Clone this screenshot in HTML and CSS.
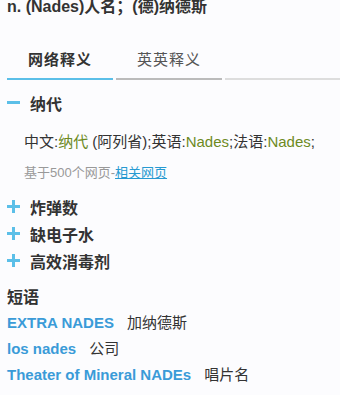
FILE: index.html
```html
<!DOCTYPE html>
<html>
<head>
    <title>Nades</title>
    <link rel="stylesheet" href="styles.css">
</head>
<body>
    <div class="trans">n. (Nades)人名；(德)纳德斯</div>

    <div class="tabs">
        <div class="tab active">网络释义</div>
        <div class="tab">英英释义</div>
        <div class="tab rest"></div>
    </div>

    <!-- 网络释义 -->
    <div class="sense open">
        <div class="sense-head"><span class="toggle minus"></span>纳代</div>
        <div class="sense-body">
            <p class="def">中文:<span class="hl">纳代</span> (阿列省);英语:<span class="hl">Nades</span>;法语:<span class="hl">Nades</span>;</p>
            <p class="src">基于500个网页-<a href="#">相关网页</a></p>
        </div>
    </div>
    <div class="sense">
        <div class="sense-head"><span class="toggle plus"></span>炸弹数</div>
    </div>
    <div class="sense">
        <div class="sense-head"><span class="toggle plus"></span>缺电子水</div>
    </div>
    <div class="sense">
        <div class="sense-head"><span class="toggle plus"></span>高效消毒剂</div>
    </div>

    <div class="phrases">
        <div class="phrases-title">短语</div>
        <div class="phrase"><a href="#">EXTRA NADES</a>加纳德斯</div>
        <div class="phrase"><a href="#">los nades</a>公司</div>
        <div class="phrase"><a href="#">Theater of Mineral NADEs</a>唱片名</div>
    </div>
</body>
</html>
```

FILE: styles.css
```css
body {
    margin: 0;
    padding: 0 0 0 7px;
    background-color: #fcfcfe;
    color: #333;
    font-family: "Liberation Sans", Arial, "Noto Sans CJK SC", sans-serif;
    font-size: 15px;
    overflow: hidden;
}

/* Top translation line */
.trans {
    margin-top: -2px;
    font-size: 16px;
    font-weight: bold;
    line-height: 18px;
    white-space: nowrap;
}

/* Tabs */
.tabs {
    display: flex;
    margin-top: 33px;
}

.tab {
    width: 106px;
    margin-right: 3px;
    line-height: 22px;
    padding-bottom: 7px;
    text-align: center;
    font-size: 15px;
    letter-spacing: 1px;
    color: #555;
    border-bottom: 2px solid #bbb;
}

.tab.active {
    color: #333;
    font-weight: bold;
    border-bottom-color: #5bbfe8;
}

.tab.rest {
    flex: 1;
    margin-right: 0;
    border-bottom-color: #ddd;
}

/* Senses */
.sense-head {
    display: flex;
    align-items: center;
    height: 27px;
    font-size: 16px;
    font-weight: bold;
}

.sense.open {
    margin-top: 9px;
}

.toggle {
    position: relative;
    width: 13px;
    height: 13px;
    margin-right: 10px;
}

.toggle::before,
.plus::after {
    content: "";
    position: absolute;
    background-color: #5bbfe8;
}

.toggle::before {
    left: 0;
    top: 5px;
    width: 13px;
    height: 3px;
}

.plus::after {
    left: 5px;
    top: 0;
    width: 3px;
    height: 13px;
}

.sense-body {
    padding-left: 17px;
    padding-bottom: 11px;
}

.def {
    margin: 15px 0 0;
    line-height: 22px;
}

.hl {
    color: #6d8a1f;
}

.src {
    margin: 11px 0 0;
    font-size: 13px;
    color: #999;
    line-height: 18px;
}

.src a {
    color: #279ad1;
}

/* Phrases */
.phrases {
    margin-top: 12px;
}

.phrases-title {
    font-size: 16px;
    font-weight: bold;
    line-height: 24px;
}

.phrase {
    line-height: 26px;
}

.phrase a {
    color: #3a9bd8;
    font-weight: bold;
    text-decoration: none;
    margin-right: 13px;
}
```
